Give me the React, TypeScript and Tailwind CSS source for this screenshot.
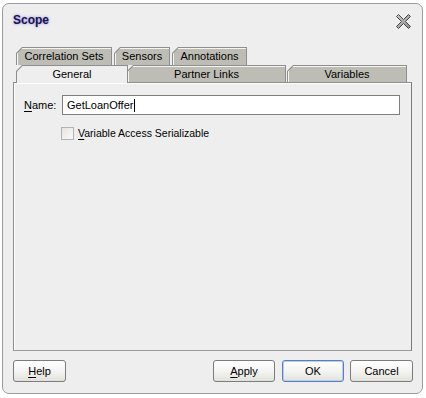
import React from 'react';

const font = "font-['Tahoma','Liberation_Sans',Arial,sans-serif]";

interface TabProps {
  label: string;
  className: string;
  selected?: boolean;
}

const Tab: React.FC<TabProps> = ({ label, className, selected }) => (
  <div
    className={`${className} shrink-0 bg-[#8e8e8e] pt-[1px] pl-[1px] pr-[1px] [clip-path:polygon(6px_0,100%_0,100%_100%,0_100%,0_6px)]`}
  >
    <div
      className={`h-full flex items-center justify-center text-[11px] text-black [clip-path:polygon(5.5px_0,100%_0,100%_100%,0_100%,0_5.5px)] ${
        selected ? 'bg-[#eeeeee]' : 'bg-[#bdbdb5] shadow-[inset_1px_1px_0_#f4f4f0]'
      }`}
    >
      {label}
    </div>
  </div>
);

const Button: React.FC<{ className: string; def?: boolean; children: React.ReactNode }> = ({ className, def, children }) => (
  <button
    className={`${className} h-[22px] rounded-[3px] border text-[11px] text-black bg-gradient-to-b from-[#ffffff] via-[#f4f4f2] to-[#e2e2dc] ${
      def ? 'border-[#5a7dbe] shadow-[inset_0_0_0_1px_#b9cdf0]' : 'border-[#7c7c7c]'
    }`}
  >
    {children}
  </button>
);

const CloseIcon = () => (
  <svg width="15" height="15" viewBox="0 0 15 15" className="mt-[3px]">
    <defs>
      <linearGradient id="xg" x1="0" y1="0" x2="1" y2="1">
        <stop offset="0" stopColor="#c8c8c8" />
        <stop offset="1" stopColor="#8a8a8a" />
      </linearGradient>
    </defs>
    <polygon
      points="2.5,0.5 7.5,5.5 12.5,0.5 14.5,2.5 9.5,7.5 14.5,12.5 12.5,14.5 7.5,9.5 2.5,14.5 0.5,12.5 5.5,7.5 0.5,2.5"
      fill="url(#xg)"
      stroke="#4a4a4a"
      strokeWidth="1"
      strokeLinejoin="round"
    />
  </svg>
);

export default function App() {
  return (
    <div className={`w-[426px] h-[398px] bg-white pt-[3px] pl-[2px] ${font}`}>
      <div className="w-[421px] h-[391px] border border-[#9c9c9c] rounded-[7px] bg-[#eeeeee] flex flex-col">
        {/* title */}
        <div className="h-[32px] flex items-center justify-between pl-[10px] pr-[11px]">
          <span className="text-[12px] font-bold text-[#15154a] [text-shadow:0_0_3px_#a89fe6,0_0_2px_#c0b8f2]">
            Scope
          </span>
          <CloseIcon />
        </div>

        {/* tabs */}
        <div className="mt-[11px] ml-[10px] pl-[3px] flex flex-col">
          <div className="h-[18px] flex gap-[2px]">
            <Tab label="Correlation Sets" className="w-[96px]" />
            <Tab label="Sensors" className="w-[56px]" />
            <Tab label="Annotations" className="w-[75px]" />
          </div>
          <div className="h-[17px] flex">
            <Tab label="General" className="w-[112px] relative z-10 h-[18px]" selected />
            <Tab label="Partner Links" className="w-[159px] -ml-[1px]" />
            <Tab label="Variables" className="w-[120px] ml-[1px]" />
          </div>
        </div>

        {/* panel */}
        <div className="ml-[10px] w-[399px] h-[269px] border border-[#8e8e8e] border-r-[#7a7a7a] border-b-[#9a9a9a] bg-[#eeeeee] shadow-[inset_1px_1px_0_#ffffff] text-[11px] text-black">
          <div className="mt-[12px] ml-[10px] flex items-center">
            <span className="w-[38px]">
              <span className="underline underline-offset-2">N</span>ame:
            </span>
            <div className="w-[338px] h-[20px] border border-[#7f7f7f] bg-white flex items-center pl-[4px]">
              GetLoanOffer
              <span className="w-[1px] h-[13px] bg-black ml-[1px]" />
            </div>
          </div>
          <div className="mt-[11px] ml-[47px] flex items-center">
            <span className="w-[13px] h-[13px] border border-[#b3b3b3] bg-gradient-to-br from-[#e4e4e0] to-[#fafafa]" />
            <span className="ml-[4px] text-[10.5px]">
              <span className="underline underline-offset-2">V</span>ariable Access Serializable
            </span>
          </div>
        </div>

        {/* buttons */}
        <div className="mt-[9px] ml-[10px] mr-[9px] flex items-center">
          <Button className="w-[53px]">
            <span className="underline underline-offset-2">H</span>elp
          </Button>
          <div className="flex-1" />
          <Button className="w-[62px]">
            <span className="underline underline-offset-2">A</span>pply
          </Button>
          <Button className="w-[62px] ml-[7px]" def>
            OK
          </Button>
          <Button className="w-[63px] ml-[6px]">Cancel</Button>
        </div>
      </div>
    </div>
  );
}
